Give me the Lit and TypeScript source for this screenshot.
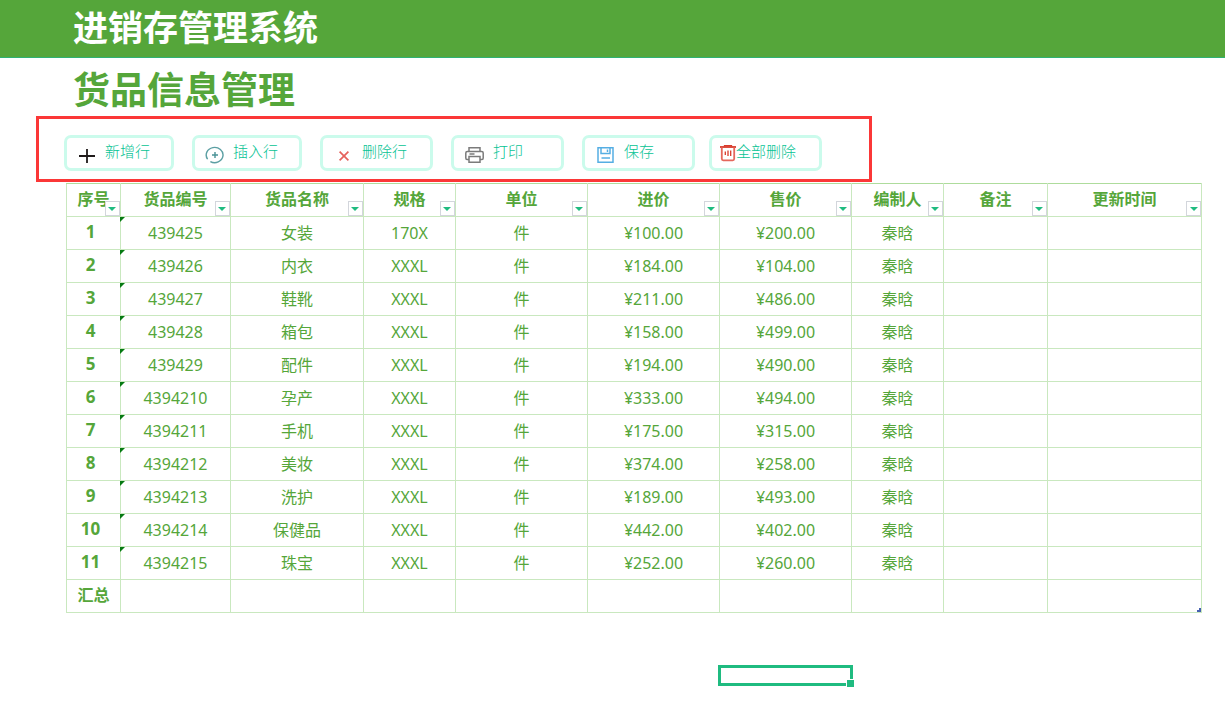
import { LitElement, html, css, svg } from "lit";
import { customElement } from "lit/decorators.js";

interface Column {
  label: string;
  span: number;
}

const columns: Column[] = [
  { label: "序号", span: 54 },
  { label: "货品编号", span: 110 },
  { label: "货品名称", span: 133 },
  { label: "规格", span: 92 },
  { label: "单位", span: 132 },
  { label: "进价", span: 132 },
  { label: "售价", span: 132 },
  { label: "编制人", span: 92 },
  { label: "备注", span: 104 },
  { label: "更新时间", span: 154 },
];
const total = columns.reduce((sum, c) => sum + c.span, 0);

const goods: [string, string, string, number, number][] = [
  ["439425", "女装", "170X", 100, 200],
  ["439426", "内衣", "XXXL", 184, 104],
  ["439427", "鞋靴", "XXXL", 211, 486],
  ["439428", "箱包", "XXXL", 158, 499],
  ["439429", "配件", "XXXL", 194, 490],
  ["4394210", "孕产", "XXXL", 333, 494],
  ["4394211", "手机", "XXXL", 175, 315],
  ["4394212", "美妆", "XXXL", 374, 258],
  ["4394213", "洗护", "XXXL", 189, 493],
  ["4394214", "保健品", "XXXL", 442, 402],
  ["4394215", "珠宝", "XXXL", 252, 260],
];

const money = (n: number) => `¥${n.toFixed(2)}`;

const icons = {
  add: svg`<path d="M2 11H18M10 4V18" stroke="#1f1a1a" stroke-width="1.8"/>`,
  insert: svg`<path d="M2.6 14.2A8.4 7.6 0 1 1 5.4 16.6M2.6 14.2L1.6 12M5.4 16.6A8.4 7.6 0 0 0 10 17.8" stroke="#5b9fa3" stroke-width="1.4"/><path d="M7 10H13M10 7V13" stroke="#4a9296" stroke-width="1.4"/>`,
  remove: svg`<path d="M5.6 6.6L14.4 15.4M14.4 6.6L5.6 15.4" stroke="#e5625c" stroke-width="1.7"/>`,
  print: svg`<g stroke="#7b7b7b" stroke-width="1.5"><path d="M4 6.5V2.7H15V6.5"/><path d="M4 14.5H2Q.8 14.5 .8 13V8Q.8 6.5 2.3 6.5H16.7Q18.2 6.5 18.2 8V13Q18.2 14.5 17 14.5H15"/><path d="M4 11.5H15V17.3H4Z M4.5 9H9.5"/></g>`,
  save: svg`<g stroke="#55aee3" stroke-width="1.5"><path d="M2 2.8H17V17.2H2Z"/><path d="M5 3V8.5H14V3M11.5 4.5V7M5.5 13H14"/></g>`,
  clear: svg`<g stroke="#d93a2b" stroke-width="1.3"><path d="M2 4H18" stroke-width="1.8"/><path d="M6.5 3.5V2.6H13.5V3.5"/><path d="M3.8 4.5V15.8Q3.8 17.3 5.3 17.3H14.7Q16.2 17.3 16.2 15.8V4.5" stroke="#e5675c" stroke-width="1.8"/><path d="M7.3 8.5V12M10 7.5V13M12.7 7.5V13"/></g>`,
};

const actions: { label: string; kind: keyof typeof icons }[] = [
  { label: "新增行", kind: "add" },
  { label: "插入行", kind: "insert" },
  { label: "删除行", kind: "remove" },
  { label: "打印", kind: "print" },
  { label: "保存", kind: "save" },
  { label: "全部删除", kind: "clear" },
];

@customElement("app-root")
export class AppRoot extends LitElement {
  static styles = css`
    :host {
      display: block;
      min-height: 100vh;
      background: #fff;
      color: #55a63a;
      font-family: "Noto Sans", "Noto Sans CJK SC", sans-serif;
      font-size: 16px;
      line-height: 24px;
    }
    * {
      box-sizing: border-box;
    }
    .banner {
      height: 58px;
      padding: 0 73px;
      background: #55a63a;
      border-bottom: 1px solid #2fb174;
      color: #fff;
    }
    .system,
    .page {
      margin: 0;
      font-family: "Noto Sans CJK SC", sans-serif;
      font-weight: 700;
    }
    .system {
      font-size: 35px;
      line-height: 52px;
    }
    .page {
      padding: 2px 73px 0;
      font-size: 37px;
      line-height: 56px;
    }
    .toolbar {
      display: flex;
      gap: 18px;
      width: fit-content;
      margin-left: 36px;
      padding: 16px 47px 8px 25px;
      border: 3px solid #fb3737;
    }
    .action {
      display: flex;
      align-items: center;
      width: 113px;
      height: 36px;
      padding: 0 11px;
      border: 3px solid #cbfbec;
      border-radius: 7px;
      background: #fff;
      color: #06c394;
      font: 15px/24px "Noto Sans CJK SC", sans-serif;
      font-weight: 300;
      white-space: nowrap;
    }
    .add,
    .insert {
      width: 110px;
      padding: 0 10px;
    }
    .clear {
      padding: 0 6px;
      margin-left: -4px;
    }
    .icon {
      flex: none;
      width: 20px;
      height: 20px;
      margin: 4px 8px 0 0;
      fill: none;
    }
    .clear .icon {
      margin: 0 -2px 0 0;
    }
    .caption {
      padding-bottom: 4px;
    }
    .sheet {
      margin: 1px 23px 0 66px;
    }
    .grid {
      width: 100%;
      table-layout: fixed;
      border-collapse: collapse;
      border: 1px solid #aedc9c;
    }
    .grid th,
    .grid td {
      position: relative;
      height: 33px;
      padding: 0;
      border: 1px solid #c9e8bf;
      text-align: center;
      white-space: nowrap;
    }
    .grid td {
      font-weight: 400;
    }
    .grid thead th {
      border-top-color: #aedc9c;
    }
    .grid th {
      padding-bottom: 2px;
      font-weight: 700;
    }
    .index {
      padding-right: 6px;
      font-size: 17px;
    }
    .code::before {
      content: "";
      position: absolute;
      left: -1px;
      top: 0;
      border-top: 5px solid #067a12;
      border-right: 5px solid transparent;
    }
    .filter {
      position: absolute;
      right: 0;
      bottom: 0;
      display: grid;
      place-items: center;
      width: 15px;
      height: 15px;
      padding: 0;
      border: 1px solid #d3d6dc;
      background: #fff;
    }
    .filter::before {
      content: "";
      border: 4px solid transparent;
      border-top-color: #1fbb80;
      border-bottom: 0;
    }
    .end::after {
      content: "";
      position: absolute;
      right: 0;
      bottom: 0;
      width: 4px;
      height: 4px;
      background: #4560b0;
      clip-path: polygon(50% 0, 100% 0, 100% 100%, 0 100%, 0 50%, 50% 50%);
    }
    .tracks {
      display: grid;
      margin-top: 52px;
    }
    .cursor {
      position: relative;
      grid-column: 7;
      height: 21px;
      margin: 0 -1px 0 -2px;
      border: 3px solid #1fbb80;
    }
    .cursor::after {
      content: "";
      position: absolute;
      right: -5px;
      bottom: -5px;
      width: 7px;
      height: 7px;
      border: 1px solid #fff;
      background: #1fbb80;
    }
  `;

  render() {
    return html`
      <header class="banner"><h1 class="system">进销存管理系统</h1></header>
      <main>
        <h2 class="page">货品信息管理</h2>
        <div class="toolbar" role="toolbar">
          ${actions.map(
            (a) => html`<button class="action ${a.kind}" type="button">
              <svg class="icon" viewBox="0 0 20 20" aria-hidden="true">${icons[a.kind]}</svg>
              <span class="caption">${a.label}</span>
            </button>`
          )}
        </div>
        <div class="sheet">
          <table class="grid">
            <colgroup>
              ${columns.map((c) => html`<col style="width:${(c.span / total) * 100}%" />`)}
            </colgroup>
            <thead>
              <tr>
                ${columns.map(
                  (c) => html`<th scope="col">
                    ${c.label}<button class="filter" type="button" aria-label=${c.label}></button>
                  </th>`
                )}
              </tr>
            </thead>
            <tbody>
              ${goods.map(
                ([code, name, size, cost, price], i) => html`<tr>
                  <th scope="row"><div class="index">${i + 1}</div></th>
                  <td class="code">${code}</td>
                  <td>${name}</td>
                  <td>${size}</td>
                  <td>件</td>
                  <td>${money(cost)}</td>
                  <td>${money(price)}</td>
                  <td>秦晗</td>
                  <td></td>
                  <td></td>
                </tr>`
              )}
            </tbody>
            <tfoot>
              <tr>
                <th scope="row">汇总</th>
                ${columns.slice(1).map((_, i) => html`<td class=${i === columns.length - 2 ? "end" : ""}></td>`)}
              </tr>
            </tfoot>
          </table>
          <div class="tracks" style="grid-template-columns:${columns.map((c) => `${c.span}fr`).join(" ")}">
            <div class="cursor"></div>
          </div>
        </div>
      </main>
    `;
  }
}
